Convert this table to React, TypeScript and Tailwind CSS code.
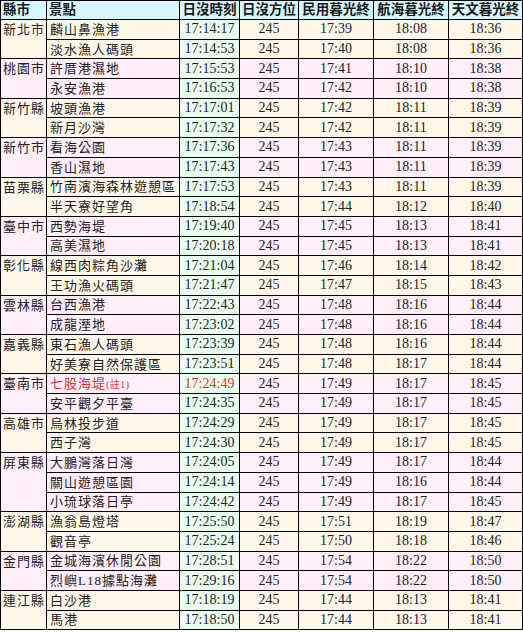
import React from 'react'

type Spot = {
  name: string
  note?: string
  sunset: string
  civil: string
  nautical: string
  astro: string
  highlight?: boolean
}

type County = {
  county: string
  spots: Spot[]
}

const rows: County[] = [
  {
    county: '新北市',
    spots: [
      { name: '麟山鼻漁港', sunset: '17:14:17', civil: '17:39', nautical: '18:08', astro: '18:36' },
      { name: '淡水漁人碼頭', sunset: '17:14:53', civil: '17:40', nautical: '18:08', astro: '18:36' }
    ]
  },
  {
    county: '桃園市',
    spots: [
      { name: '許厝港濕地', sunset: '17:15:53', civil: '17:41', nautical: '18:10', astro: '18:38' },
      { name: '永安漁港', sunset: '17:16:53', civil: '17:42', nautical: '18:10', astro: '18:38' }
    ]
  },
  {
    county: '新竹縣',
    spots: [
      { name: '坡頭漁港', sunset: '17:17:01', civil: '17:42', nautical: '18:11', astro: '18:39' },
      { name: '新月沙灣', sunset: '17:17:32', civil: '17:42', nautical: '18:11', astro: '18:39' }
    ]
  },
  {
    county: '新竹市',
    spots: [
      { name: '看海公園', sunset: '17:17:36', civil: '17:43', nautical: '18:11', astro: '18:39' },
      { name: '香山濕地', sunset: '17:17:43', civil: '17:43', nautical: '18:11', astro: '18:39' }
    ]
  },
  {
    county: '苗栗縣',
    spots: [
      { name: '竹南濱海森林遊憩區', sunset: '17:17:53', civil: '17:43', nautical: '18:11', astro: '18:39' },
      { name: '半天寮好望角', sunset: '17:18:54', civil: '17:44', nautical: '18:12', astro: '18:40' }
    ]
  },
  {
    county: '臺中市',
    spots: [
      { name: '西勢海堤', sunset: '17:19:40', civil: '17:45', nautical: '18:13', astro: '18:41' },
      { name: '高美濕地', sunset: '17:20:18', civil: '17:45', nautical: '18:13', astro: '18:41' }
    ]
  },
  {
    county: '彰化縣',
    spots: [
      { name: '線西肉粽角沙灘', sunset: '17:21:04', civil: '17:46', nautical: '18:14', astro: '18:42' },
      { name: '王功漁火碼頭', sunset: '17:21:47', civil: '17:47', nautical: '18:15', astro: '18:43' }
    ]
  },
  {
    county: '雲林縣',
    spots: [
      { name: '台西漁港', sunset: '17:22:43', civil: '17:48', nautical: '18:16', astro: '18:44' },
      { name: '成龍溼地', sunset: '17:23:02', civil: '17:48', nautical: '18:16', astro: '18:44' }
    ]
  },
  {
    county: '嘉義縣',
    spots: [
      { name: '東石漁人碼頭', sunset: '17:23:39', civil: '17:48', nautical: '18:16', astro: '18:44' },
      { name: '好美寮自然保護區', sunset: '17:23:51', civil: '17:48', nautical: '18:17', astro: '18:44' }
    ]
  },
  {
    county: '臺南市',
    spots: [
      { name: '七股海堤', note: '(註1)', sunset: '17:24:49', civil: '17:49', nautical: '18:17', astro: '18:45', highlight: true },
      { name: '安平觀夕平臺', sunset: '17:24:35', civil: '17:49', nautical: '18:17', astro: '18:45' }
    ]
  },
  {
    county: '高雄市',
    spots: [
      { name: '烏林投步道', sunset: '17:24:29', civil: '17:49', nautical: '18:17', astro: '18:45' },
      { name: '西子灣', sunset: '17:24:30', civil: '17:49', nautical: '18:17', astro: '18:45' }
    ]
  },
  {
    county: '屏東縣',
    spots: [
      { name: '大鵬灣落日灣', sunset: '17:24:05', civil: '17:49', nautical: '18:17', astro: '18:44' },
      { name: '關山遊憩區園', sunset: '17:24:14', civil: '17:49', nautical: '18:16', astro: '18:44' },
      { name: '小琉球落日亭', sunset: '17:24:42', civil: '17:49', nautical: '18:17', astro: '18:45' }
    ]
  },
  {
    county: '澎湖縣',
    spots: [
      { name: '漁翁島燈塔', sunset: '17:25:50', civil: '17:51', nautical: '18:19', astro: '18:47' },
      { name: '觀音亭', sunset: '17:25:24', civil: '17:50', nautical: '18:18', astro: '18:46' }
    ]
  },
  {
    county: '金門縣',
    spots: [
      { name: '金城海濱休閒公園', sunset: '17:28:51', civil: '17:54', nautical: '18:22', astro: '18:50' },
      { name: '烈嶼L18據點海灘', sunset: '17:29:16', civil: '17:54', nautical: '18:22', astro: '18:50' }
    ]
  },
  {
    county: '連江縣',
    spots: [
      { name: '白沙港', sunset: '17:18:19', civil: '17:44', nautical: '18:13', astro: '18:41' },
      { name: '馬港', sunset: '17:18:50', civil: '17:44', nautical: '18:13', astro: '18:41' }
    ]
  }
]

const headers = ['縣市', '景點', '日沒時刻', '日沒方位', '民用暮光終', '航海暮光終', '天文暮光終']

export default function App(): React.JSX.Element {
  return (
    <div className="h-[632px] w-[523px] overflow-hidden bg-white">
      <table className="w-[522px] table-fixed border-collapse text-[#222] [font-family:'Liberation_Serif','Noto_Sans_CJK_TC',serif]">
        <colgroup>
          <col className="w-[46px]" />
          <col className="w-[133px]" />
          <col className="w-[60px]" />
          <col className="w-[59px]" />
          <col className="w-[75px]" />
          <col className="w-[75px]" />
          <col className="w-[74px]" />
        </colgroup>
        <thead>
          <tr className="h-[19px]">
            {headers.map((label, i) => (
              <th
                key={label}
                className={
                  'overflow-hidden whitespace-nowrap border border-black bg-[#d8f6ff] p-0 text-[13.5px] leading-none font-bold text-[#1a1a1a] [font-family:\'Noto_Sans_CJK_TC\',sans-serif] ' +
                  (i < 2 ? 'pl-[2px] text-left' : 'text-center')
                }
              >
                {label}
              </th>
            ))}
          </tr>
        </thead>
        <tbody>
          {rows.map((group, gi) => {
            const bg = gi % 2 === 0 ? 'bg-[#fff8ea]' : 'bg-[#ffeffa]'
            return group.spots.map((spot, si) => {
              const tone = spot.highlight ? 'text-[#e0302c]' : ''
              return (
                <tr key={group.county + spot.name} className={'h-[19.7px] ' + bg}>
                  {si === 0 ? (
                    <td
                      rowSpan={group.spots.length}
                      className="border border-black p-0 pt-[3px] pl-[2px] align-top text-[13px] leading-[14px] tracking-[1px]"
                    >
                      {group.county}
                    </td>
                  ) : null}
                  <td className={'whitespace-nowrap border border-black p-0 pl-[3px] text-[13px] leading-none tracking-[1px] ' + tone}>
                    {spot.name}
                    {spot.note ? <span className="text-[10px] tracking-[0.5px]">{spot.note}</span> : null}
                  </td>
                  <td className={'border border-black bg-[#eafff0] p-0 text-center text-[14px] leading-none ' + tone}>
                    {spot.sunset}
                  </td>
                  <td className="border border-black p-0 text-center text-[14px] leading-none">245</td>
                  <td className="border border-black p-0 text-center text-[14px] leading-none">{spot.civil}</td>
                  <td className="border border-black p-0 text-center text-[14px] leading-none">{spot.nautical}</td>
                  <td className="border border-black p-0 text-center text-[14px] leading-none">{spot.astro}</td>
                </tr>
              )
            })
          })}
        </tbody>
      </table>
    </div>
  )
}
